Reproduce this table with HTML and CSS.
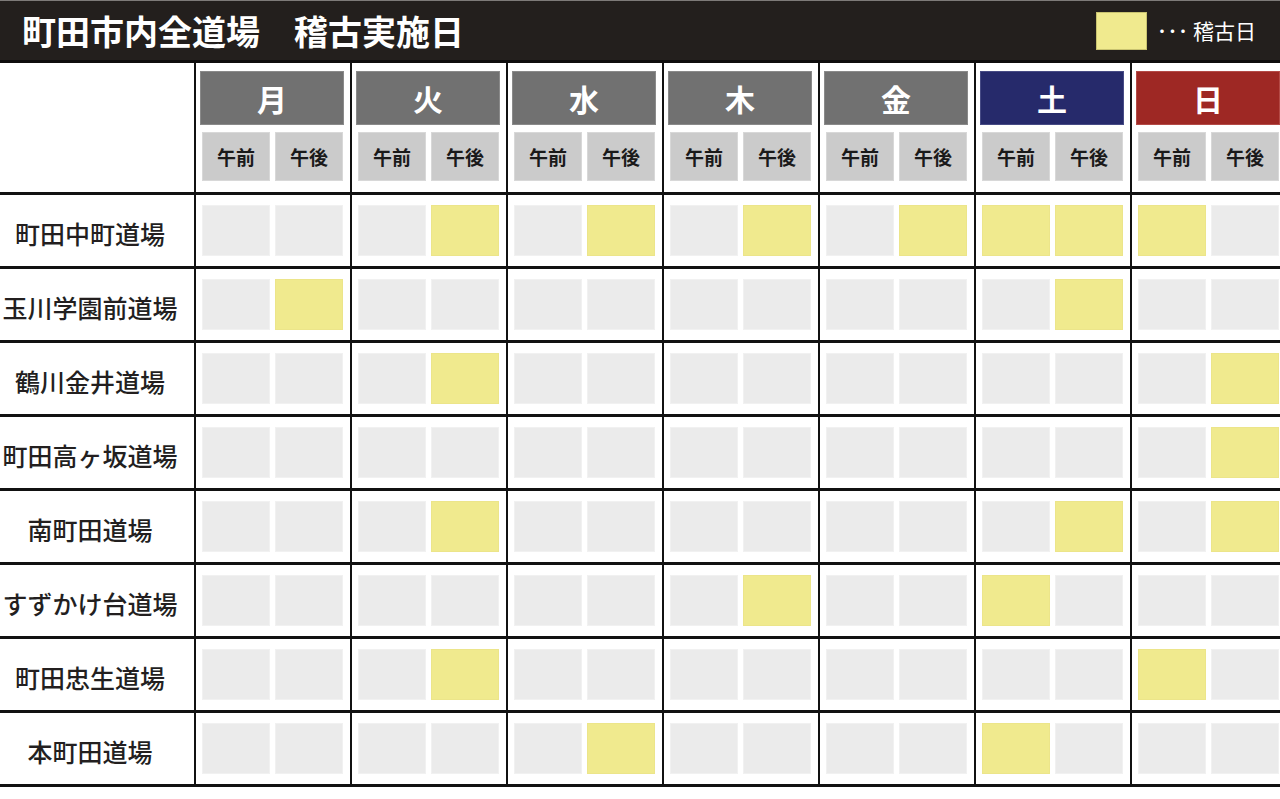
FILE: index.html
```html
<!DOCTYPE html>
<html lang="ja">
<head>
<meta charset="utf-8">
<title>町田市内全道場 稽古実施日</title>
<link rel="stylesheet" href="styles.css">
</head>
<body>
<header class="topbar">
  <h1 class="title">町田市内全道場　稽古実施日</h1>
  <div class="legend"><span class="legend-box"></span><span class="legend-text">･･･ 稽古日</span></div>
</header>
<main class="table">
  <div class="row head">
    <div class="label"></div>
    <div class="day"><div class="dh">月</div><div class="subs"><div class="sub">午前</div><div class="sub">午後</div></div></div>
    <div class="day"><div class="dh">火</div><div class="subs"><div class="sub">午前</div><div class="sub">午後</div></div></div>
    <div class="day"><div class="dh">水</div><div class="subs"><div class="sub">午前</div><div class="sub">午後</div></div></div>
    <div class="day"><div class="dh">木</div><div class="subs"><div class="sub">午前</div><div class="sub">午後</div></div></div>
    <div class="day"><div class="dh">金</div><div class="subs"><div class="sub">午前</div><div class="sub">午後</div></div></div>
    <div class="day"><div class="dh sat">土</div><div class="subs"><div class="sub">午前</div><div class="sub">午後</div></div></div>
    <div class="day"><div class="dh sun">日</div><div class="subs"><div class="sub">午前</div><div class="sub">午後</div></div></div>
  </div>

  <div class="row">
    <div class="label">町田中町道場</div>
    <div class="day"><span class="c"></span><span class="c"></span></div>
    <div class="day"><span class="c"></span><span class="c on"></span></div>
    <div class="day"><span class="c"></span><span class="c on"></span></div>
    <div class="day"><span class="c"></span><span class="c on"></span></div>
    <div class="day"><span class="c"></span><span class="c on"></span></div>
    <div class="day"><span class="c on"></span><span class="c on"></span></div>
    <div class="day"><span class="c on"></span><span class="c"></span></div>
  </div>

  <div class="row">
    <div class="label">玉川学園前道場</div>
    <div class="day"><span class="c"></span><span class="c on"></span></div>
    <div class="day"><span class="c"></span><span class="c"></span></div>
    <div class="day"><span class="c"></span><span class="c"></span></div>
    <div class="day"><span class="c"></span><span class="c"></span></div>
    <div class="day"><span class="c"></span><span class="c"></span></div>
    <div class="day"><span class="c"></span><span class="c on"></span></div>
    <div class="day"><span class="c"></span><span class="c"></span></div>
  </div>

  <div class="row">
    <div class="label">鶴川金井道場</div>
    <div class="day"><span class="c"></span><span class="c"></span></div>
    <div class="day"><span class="c"></span><span class="c on"></span></div>
    <div class="day"><span class="c"></span><span class="c"></span></div>
    <div class="day"><span class="c"></span><span class="c"></span></div>
    <div class="day"><span class="c"></span><span class="c"></span></div>
    <div class="day"><span class="c"></span><span class="c"></span></div>
    <div class="day"><span class="c"></span><span class="c on"></span></div>
  </div>

  <div class="row">
    <div class="label">町田高ヶ坂道場</div>
    <div class="day"><span class="c"></span><span class="c"></span></div>
    <div class="day"><span class="c"></span><span class="c"></span></div>
    <div class="day"><span class="c"></span><span class="c"></span></div>
    <div class="day"><span class="c"></span><span class="c"></span></div>
    <div class="day"><span class="c"></span><span class="c"></span></div>
    <div class="day"><span class="c"></span><span class="c"></span></div>
    <div class="day"><span class="c"></span><span class="c on"></span></div>
  </div>

  <div class="row">
    <div class="label">南町田道場</div>
    <div class="day"><span class="c"></span><span class="c"></span></div>
    <div class="day"><span class="c"></span><span class="c on"></span></div>
    <div class="day"><span class="c"></span><span class="c"></span></div>
    <div class="day"><span class="c"></span><span class="c"></span></div>
    <div class="day"><span class="c"></span><span class="c"></span></div>
    <div class="day"><span class="c"></span><span class="c on"></span></div>
    <div class="day"><span class="c"></span><span class="c on"></span></div>
  </div>

  <div class="row">
    <div class="label">すずかけ台道場</div>
    <div class="day"><span class="c"></span><span class="c"></span></div>
    <div class="day"><span class="c"></span><span class="c"></span></div>
    <div class="day"><span class="c"></span><span class="c"></span></div>
    <div class="day"><span class="c"></span><span class="c on"></span></div>
    <div class="day"><span class="c"></span><span class="c"></span></div>
    <div class="day"><span class="c on"></span><span class="c"></span></div>
    <div class="day"><span class="c"></span><span class="c"></span></div>
  </div>

  <div class="row">
    <div class="label">町田忠生道場</div>
    <div class="day"><span class="c"></span><span class="c"></span></div>
    <div class="day"><span class="c"></span><span class="c on"></span></div>
    <div class="day"><span class="c"></span><span class="c"></span></div>
    <div class="day"><span class="c"></span><span class="c"></span></div>
    <div class="day"><span class="c"></span><span class="c"></span></div>
    <div class="day"><span class="c"></span><span class="c"></span></div>
    <div class="day"><span class="c on"></span><span class="c"></span></div>
  </div>

  <div class="row last">
    <div class="label">本町田道場</div>
    <div class="day"><span class="c"></span><span class="c"></span></div>
    <div class="day"><span class="c"></span><span class="c"></span></div>
    <div class="day"><span class="c"></span><span class="c on"></span></div>
    <div class="day"><span class="c"></span><span class="c"></span></div>
    <div class="day"><span class="c"></span><span class="c"></span></div>
    <div class="day"><span class="c on"></span><span class="c"></span></div>
    <div class="day"><span class="c"></span><span class="c"></span></div>
  </div>
</main>
</body>
</html>
```

FILE: styles.css
```css
* { box-sizing: border-box; }

html, body {
  margin: 0;
  padding: 0;
}

body {
  width: 1280px;
  height: 799px;
  overflow: hidden;
  background: #ffffff;
  font-family: "Noto Sans CJK JP", "Noto Sans", sans-serif;
  color: #231f1f;
}

.topbar {
  height: 63px;
  background: #231f1d;
  border-top: 1px solid #7d7a78;
  border-bottom: 3px solid #0e0d0d;
  display: flex;
  align-items: center;
  justify-content: space-between;
  padding: 0 24px 0 22px;
}

.title {
  margin: 0;
  color: #ffffff;
  font-size: 34px;
  font-weight: 700;
  letter-spacing: 0;
  line-height: 1;
}

.legend {
  display: flex;
  align-items: center;
  gap: 10px;
}

.legend-box {
  width: 51px;
  height: 38px;
  background: #f0ea8e;
  border: 1px solid #c8c270;
}

.legend-text {
  color: #ffffff;
  font-size: 21px;
  font-weight: 400;
  line-height: 1;
}

.table {
  width: 1286px;
}

.row {
  display: grid;
  grid-template-columns: 194px repeat(7, 156px);
  border-top: 3px solid #111111;
}

.row.head {
  border-top: 0;
  height: 129px;
}

.row.last {
  border-bottom: 3px solid #111111;
}

.label {
  display: flex;
  align-items: center;
  justify-content: center;
  padding: 4px 14px 0 0;
  font-size: 25px;
  font-weight: 500;
  color: #231f1f;
  white-space: nowrap;
}

.day {
  border-left: 2px solid #111111;
  display: flex;
  gap: 5px;
  padding: 10px 0 10px 6px;
}

.head .day {
  display: block;
  padding: 8px 6px 0 4px;
}

.dh {
  height: 54px;
  background: #717171;
  border: 1px solid #8a8a8a;
  color: #ffffff;
  font-size: 30px;
  font-weight: 700;
  display: flex;
  align-items: center;
  justify-content: center;
  line-height: 1;
}

.dh.sat {
  background: #262a6b;
  border-color: #474b85;
}

.dh.sun {
  background: #9e2824;
  border-color: #b44a46;
}

.subs {
  display: flex;
  gap: 5px;
  padding: 7px 0 0 2px;
}

.sub {
  width: 68px;
  height: 49px;
  background: #cbcbcb;
  border: 1px solid #d8d8d8;
  display: flex;
  align-items: center;
  justify-content: center;
  font-size: 19px;
  font-weight: 700;
  color: #1a1a1a;
  line-height: 1;
}

.c {
  width: 68px;
  height: 51px;
  background: #ebebeb;
  border: 1px solid #f1f1f1;
}

.c.on {
  background: #f0ea8e;
  border-color: #ece58a;
}
```
